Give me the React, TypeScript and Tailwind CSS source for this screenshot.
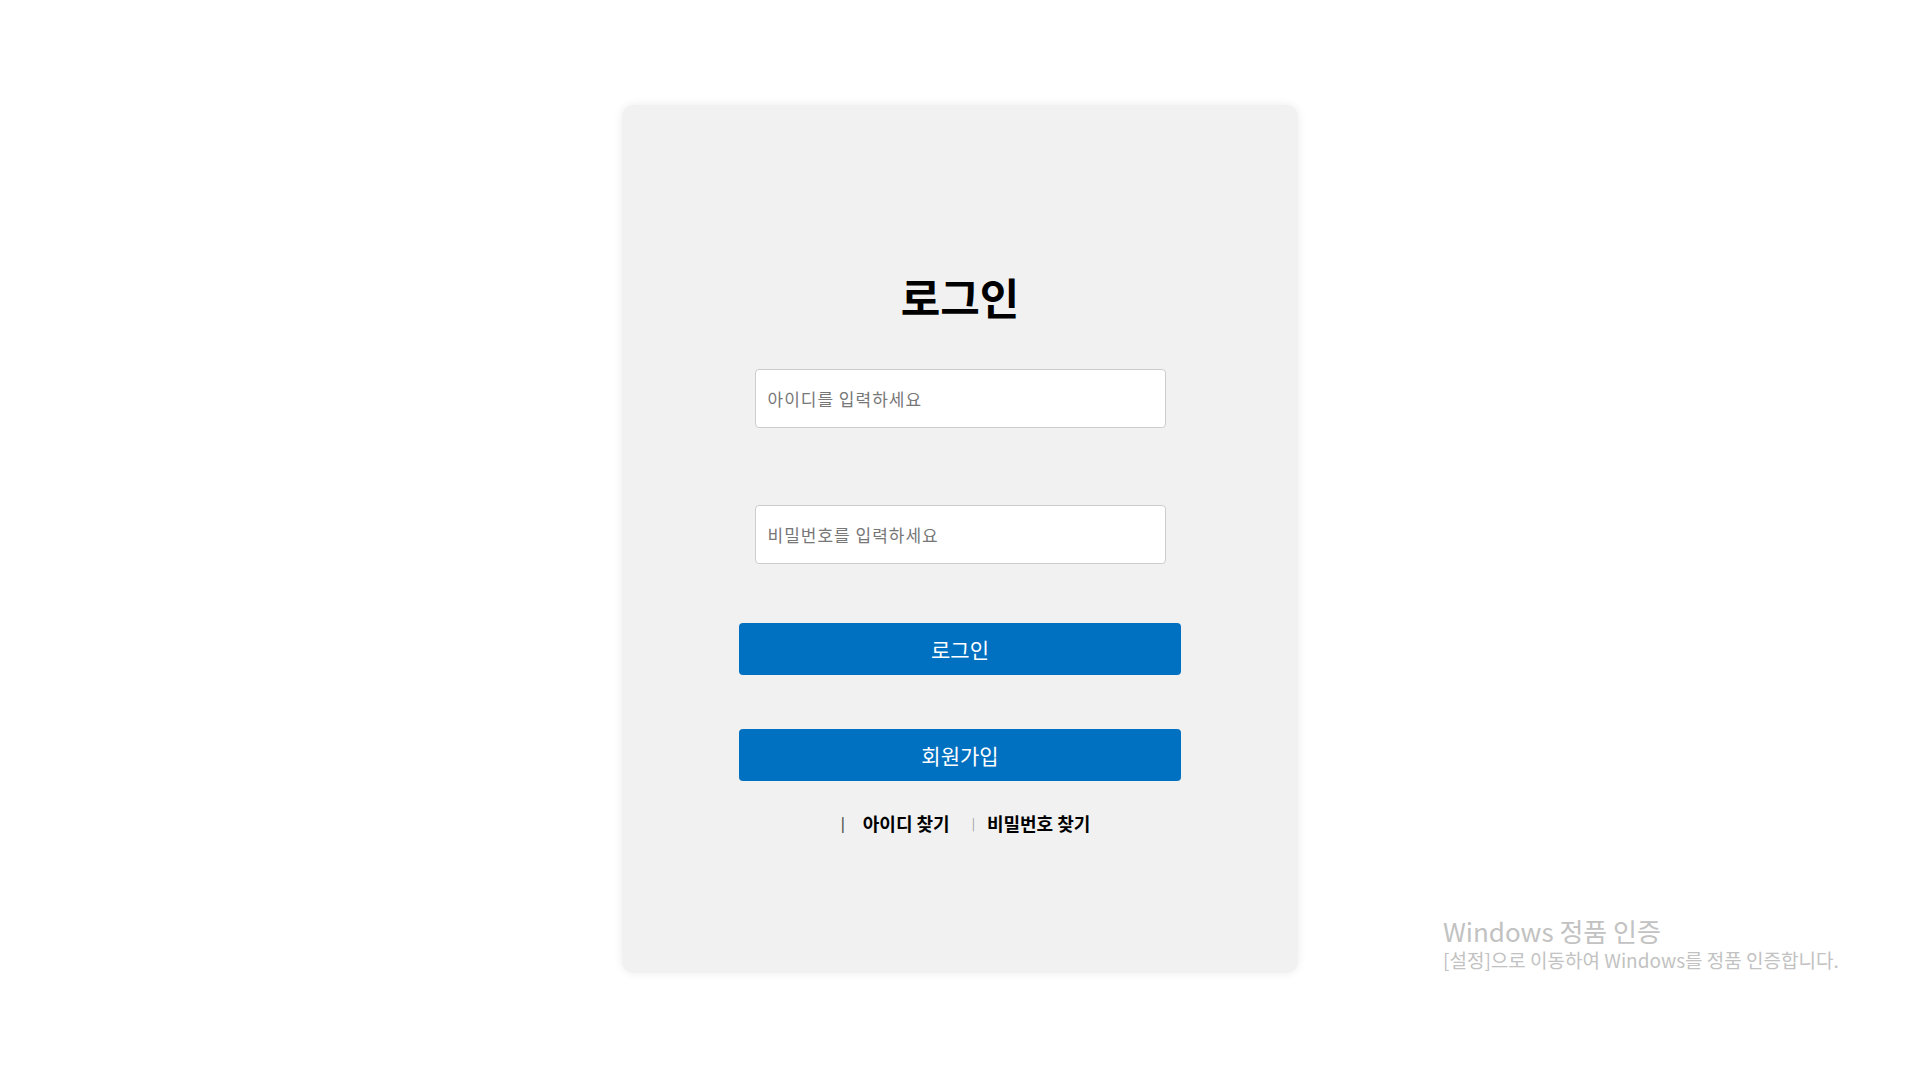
import React from "react";

const KR = { fontFamily: '"Noto Sans CJK KR", "Noto Sans", sans-serif' };

export default function App() {
  return (
    <div className="relative min-h-screen w-full bg-white" style={KR}>
      <div className="pt-[105px] flex justify-center">
        <div className="w-[676px] h-[868px] bg-[#f1f1f1] rounded-[12px] shadow-[0_0_10px_rgba(0,0,0,0.08)] flex flex-col items-center pt-[167px]">
          <h1 className="text-[43px] leading-[48px] font-bold text-black">로그인</h1>
          <input
            type="text"
            placeholder="아이디를 입력하세요"
            className="mt-[49px] w-[411px] h-[59px] bg-white border border-[#cccccc] rounded-[4px] px-[12px] text-[17px] tracking-[1px] placeholder:text-[#777777] outline-none"
          />
          <input
            type="password"
            placeholder="비밀번호를 입력하세요"
            className="mt-[77px] w-[411px] h-[59px] bg-white border border-[#cccccc] rounded-[4px] px-[12px] text-[17px] tracking-[1px] placeholder:text-[#777777] outline-none"
          />
          <button className="mt-[59px] w-[442px] h-[52px] bg-[#0070c0] rounded-[4px] text-white text-[21px] leading-[52px]">
            로그인
          </button>
          <button className="mt-[54px] w-[442px] h-[52px] bg-[#0070c0] rounded-[4px] text-white text-[21px] leading-[52px]">
            회원가입
          </button>
          <div className="mt-[30px] pl-[11px] flex items-center h-[24px] text-[18px] leading-[24px]">
            <span className="text-[#555555] text-[14px] font-bold">|</span>
            <a className="ml-[18px] font-bold text-black">아이디 찾기</a>
            <span className="ml-[22px] text-[#999999] text-[12px]">|</span>
            <a className="ml-[12px] font-bold text-black">비밀번호 찾기</a>
          </div>
        </div>
      </div>
      <div className="absolute left-[1443px] top-[915px] text-[#c2c2c2]">
        <div className="text-[26px] leading-[32px]">Windows 정품 인증</div>
        <div className="text-[19px] leading-[26px]">[설정]으로 이동하여 Windows를 정품 인증합니다.</div>
      </div>
    </div>
  );
}
